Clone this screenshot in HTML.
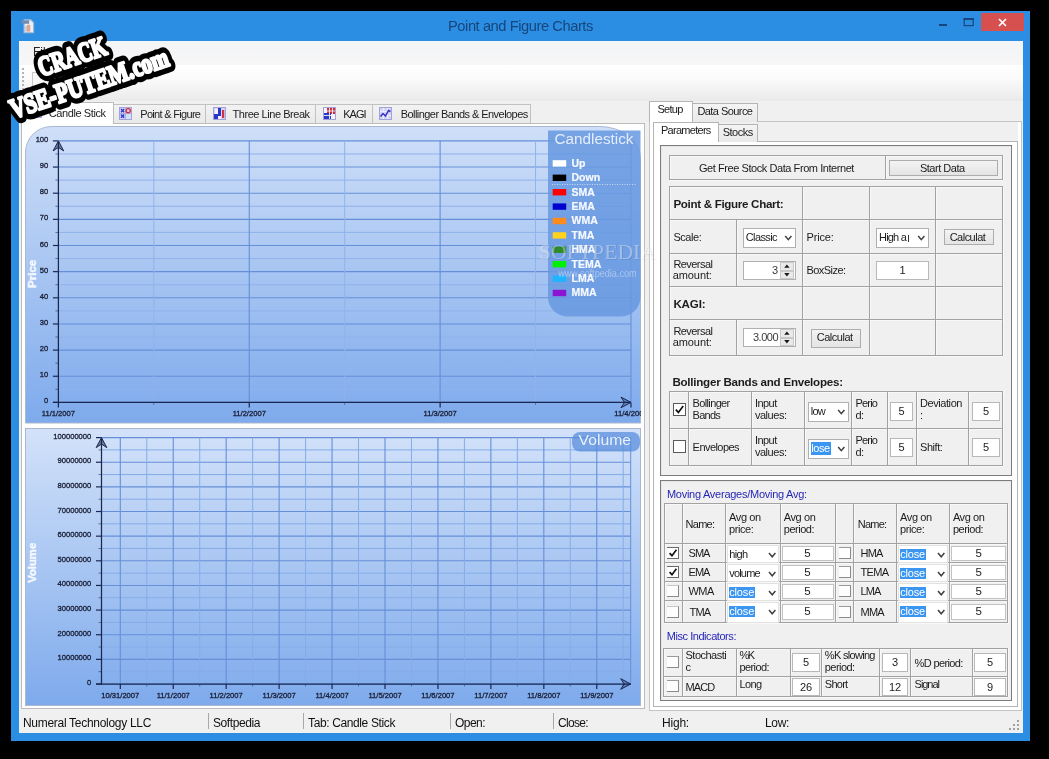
<!DOCTYPE html>
<html><head><meta charset="utf-8"><title>Point and Figure Charts</title>
<style>
html,body{margin:0;padding:0;background:#000;}
body{width:1049px;height:759px;position:relative;overflow:hidden;font-family:"Liberation Sans",sans-serif;font-size:11px;}
div,span,svg{position:absolute;box-sizing:border-box;}
#root{left:0;top:0;width:1049px;height:759px;will-change:transform;}
span{display:block;}
</style></head><body>
<div id="root"><div style="left:11px;top:11px;width:1019px;height:730px;background:#2b8ee3;"></div>
<div style="left:19px;top:41px;width:1004px;height:692px;background:#f0f0f0;"></div>
<svg style="left:19px;top:16.5px" width="18" height="18" viewBox="0 0 16 16"><path d="M4.5 2.5h6l2.5 2.5v9h-8.5z" fill="#e8eef5" stroke="#9fb6cf" stroke-width="1"/><rect x="2" y="3" width="7" height="3" fill="#6c8eb4"/><rect x="7" y="7" width="3" height="6" fill="#e2a58c"/><rect x="5.5" y="8" width="1.5" height="5" fill="#b9c9d8"/></svg>
<span style="left:448.00px;top:18.56px;font-size:14.7px;line-height:14.7px;color:#17467c;white-space:pre;letter-spacing:-0.445px;">Point and Figure Charts</span>
<div style="left:981px;top:13px;width:43px;height:17.5px;background:#d6504f;"></div>
<svg style="left:981px;top:13px" width="43" height="18"><path d="M18 6l7 7M25 6l-7 7" stroke="#fff" stroke-width="1.7" fill="none"/></svg>
<svg style="left:931px;top:13px" width="50" height="19"><rect x="8" y="11" width="8" height="2" fill="#17467c"/><rect x="33.200" y="5.600" width="9" height="7" fill="none" stroke="#17467c" stroke-width="1.2"/><rect x="32.600" y="5" width="10.2" height="2" fill="#17467c"/></svg>
<div style="left:19px;top:41px;width:1004px;height:24px;background:linear-gradient(#f3f4f5,#f7f7f8);"></div>
<div style="left:19px;top:65px;width:1004px;height:36px;background:linear-gradient(#ffffff 0%,#fbfbfb 35%,#eaeaea 100%);"></div>
<span style="left:33.00px;top:45.84px;font-size:12px;line-height:12px;color:#222;white-space:pre;">File</span>
<div style="left:22px;top:68px;width:2px;height:2px;background:#b0b4bc;"></div>
<div style="left:22px;top:72px;width:2px;height:2px;background:#b0b4bc;"></div>
<div style="left:22px;top:76px;width:2px;height:2px;background:#b0b4bc;"></div>
<div style="left:22px;top:80px;width:2px;height:2px;background:#b0b4bc;"></div>
<div style="left:22px;top:84px;width:2px;height:2px;background:#b0b4bc;"></div>
<div style="left:22px;top:88px;width:2px;height:2px;background:#b0b4bc;"></div>
<div style="left:32px;top:72px;width:24px;height:22px;border:1px solid #c8c8c8;background:#f8f8f8;"></div>
<div style="left:19px;top:710px;width:1004px;height:23px;background:#f0f0f0;"></div>
<div style="left:208px;top:713px;width:1px;height:16px;background:#a8a8a8;"></div>
<div style="left:303px;top:713px;width:1px;height:16px;background:#a8a8a8;"></div>
<div style="left:450px;top:713px;width:1px;height:16px;background:#a8a8a8;"></div>
<div style="left:553px;top:713px;width:1px;height:16px;background:#a8a8a8;"></div>
<span style="left:23.00px;top:716.54px;font-size:12px;line-height:12px;color:#111;white-space:pre;letter-spacing:-0.296px;">Numeral Technology LLC</span>
<span style="left:213.00px;top:716.54px;font-size:12px;line-height:12px;color:#111;white-space:pre;letter-spacing:-0.412px;">Softpedia</span>
<span style="left:308.00px;top:716.54px;font-size:12px;line-height:12px;color:#111;white-space:pre;letter-spacing:-0.375px;">Tab: Candle Stick</span>
<span style="left:455.00px;top:716.54px;font-size:12px;line-height:12px;color:#111;white-space:pre;letter-spacing:-0.538px;">Open:</span>
<span style="left:558.00px;top:716.54px;font-size:12px;line-height:12px;color:#111;white-space:pre;letter-spacing:-0.669px;">Close:</span>
<span style="left:662.00px;top:716.54px;font-size:12px;line-height:12px;color:#111;white-space:pre;letter-spacing:-0.203px;">High:</span>
<span style="left:765.00px;top:716.54px;font-size:12px;line-height:12px;color:#111;white-space:pre;letter-spacing:-0.337px;">Low:</span>
<div style="left:1017px;top:720px;width:2px;height:2px;background:#a0a0a0;"></div>
<div style="left:1013px;top:724px;width:2px;height:2px;background:#a0a0a0;"></div>
<div style="left:1017px;top:724px;width:2px;height:2px;background:#a0a0a0;"></div>
<div style="left:1009px;top:728px;width:2px;height:2px;background:#a0a0a0;"></div>
<div style="left:1013px;top:728px;width:2px;height:2px;background:#a0a0a0;"></div>
<div style="left:1017px;top:728px;width:2px;height:2px;background:#a0a0a0;"></div>
<div style="left:21px;top:123px;width:624px;height:586px;background:#fff;border:1px solid #bcbcbc;"></div>
<div style="left:113px;top:104px;width:93px;height:19px;background:linear-gradient(#f2f2f2,#e9e9e9);border:1px solid #c2c2c2;border-bottom:none;"></div>
<div style="left:205px;top:104px;width:111px;height:19px;background:linear-gradient(#f2f2f2,#e9e9e9);border:1px solid #c2c2c2;border-bottom:none;"></div>
<div style="left:315px;top:104px;width:58px;height:19px;background:linear-gradient(#f2f2f2,#e9e9e9);border:1px solid #c2c2c2;border-bottom:none;"></div>
<div style="left:372px;top:104px;width:159px;height:19px;background:linear-gradient(#f2f2f2,#e9e9e9);border:1px solid #c2c2c2;border-bottom:none;"></div>
<div style="left:21px;top:102px;width:93px;height:22px;background:#fff;border:1px solid #bdbdbd;border-bottom:none;"></div>
<span style="left:48.70px;top:107.69px;font-size:11px;line-height:11px;color:#1c1c1c;white-space:pre;letter-spacing:-0.396px;">Candle Stick</span>
<span style="left:140.30px;top:109.29px;font-size:11px;line-height:11px;color:#1c1c1c;white-space:pre;letter-spacing:-0.693px;">Point &amp; Figure</span>
<span style="left:232.60px;top:109.29px;font-size:11px;line-height:11px;color:#1c1c1c;white-space:pre;letter-spacing:-0.461px;">Three Line Break</span>
<span style="left:343.20px;top:109.29px;font-size:11px;line-height:11px;color:#1c1c1c;white-space:pre;letter-spacing:-0.947px;">KAGI</span>
<span style="left:400.70px;top:109.29px;font-size:11px;line-height:11px;color:#1c1c1c;white-space:pre;letter-spacing:-0.551px;">Bollinger Bands &amp; Envelopes</span>
<svg style="left:29px;top:105px" width="13" height="13" viewBox="0 0 13 13"><rect x="0.5" y="0.5" width="12" height="12" fill="#d4d4f4" stroke="#a3a3da"/><rect x="1" y="6" width="3" height="6" fill="#4a3ab0"/><rect x="4" y="3" width="3" height="7" fill="#6a5acd"/><rect x="8" y="4" width="3" height="8" fill="#c83040"/></svg>
<svg style="left:119px;top:107px" width="13" height="13" viewBox="0 0 13 13"><rect x="0.5" y="0.5" width="12" height="12" fill="#d4d4f4" stroke="#a3a3da"/><path d="M1 6.5h11M6.5 1v11" stroke="#b0b0e0" stroke-width="1"/><rect x="7" y="7" width="5" height="5" fill="#cfe4f6"/><path d="M2 2l3.2 3.2M5.2 2l-3.200 3.2M2 7.6l3.2 3.2M5.2 7.6l-3.200 3.2" stroke="#2a3cd0" stroke-width="1.4"/><circle cx="9.2" cy="3.8" r="2.1" fill="#f4d0d8" stroke="#d02838" stroke-width="1.3"/></svg>
<svg style="left:213px;top:107px" width="13" height="13" viewBox="0 0 13 13"><rect x="0.5" y="0.5" width="12" height="12" fill="#d4d4f4" stroke="#a3a3da"/><rect x="1" y="7" width="4" height="5" fill="#2a36c8"/><rect x="2" y="2" width="3" height="5" fill="#f4f4ff"/><rect x="5" y="1" width="3" height="8" fill="#2a36c8"/><rect x="5" y="9" width="3" height="3" fill="#f4f4ff"/><rect x="9" y="3" width="2.200" height="8" fill="#d83040"/></svg>
<svg style="left:323px;top:107px" width="13" height="13" viewBox="0 0 13 13"><rect x="0.5" y="0.5" width="12" height="12" fill="#f6f6fc" stroke="#a3a3da"/><rect x="4" y="1" width="8" height="6" fill="#d62a3a"/><rect x="1" y="6" width="7" height="6" fill="#2a36c8"/><path d="M6.5 1v11M9.5 1v11M1 4h11M1 8.5h11" stroke="#f0f0fa" stroke-width="0.9"/></svg>
<svg style="left:379px;top:107px" width="13" height="13" viewBox="0 0 13 13"><rect x="0.5" y="0.5" width="12" height="12" fill="#d4d4f4" stroke="#a3a3da"/><path d="M1 4.500h11M1 8.500h11M4.500 1v11M8.500 1v11" stroke="#ededfb" stroke-width="1"/><path d="M1.500 9.500l2.500-3 2.500 2.500 3-5.500 2 1" stroke="#3030c8" stroke-width="1.500" fill="none"/></svg>
<svg style="left:25px;top:126px" width="616" height="298" viewBox="25 126 616 298"><defs><linearGradient id="g1" x1="0" y1="0" x2="0" y2="1"><stop offset="0" stop-color="#cfdff8"/><stop offset="1" stop-color="#7eaaec"/></linearGradient></defs><path d="M51.5 126.5H599.5A41 32 0 0 1 640.5 158.5V423H25.5V152.5A26 26 0 0 1 51.5 126.5z" fill="url(#g1)" stroke="#a9b7d0" stroke-width="1"/><path d="M58.4 140.90H631" stroke="#668fd8" stroke-width="1.1"/><path d="M52.9 140.90H58.4" stroke="#1a2850" stroke-width="1.2"/><text x="48.3" y="141.9" font-size="7.6" text-anchor="end" fill="#1b2138" stroke="#1b2138" stroke-width="0.32" font-family="Liberation Sans, sans-serif">100</text><path d="M58.4 153.97H631" stroke="#8fb3eb" stroke-width="1"/><path d="M55.4 153.97H58.4" stroke="#1a2850" stroke-width="0.8" opacity="0.7"/><path d="M58.4 167.05H631" stroke="#668fd8" stroke-width="1.1"/><path d="M52.9 167.05H58.4" stroke="#1a2850" stroke-width="1.2"/><text x="48.3" y="168.05" font-size="7.6" text-anchor="end" fill="#1b2138" stroke="#1b2138" stroke-width="0.32" font-family="Liberation Sans, sans-serif">90</text><path d="M58.4 180.12H631" stroke="#8fb3eb" stroke-width="1"/><path d="M55.4 180.12H58.4" stroke="#1a2850" stroke-width="0.8" opacity="0.7"/><path d="M58.4 193.20H631" stroke="#668fd8" stroke-width="1.1"/><path d="M52.9 193.20H58.4" stroke="#1a2850" stroke-width="1.2"/><text x="48.3" y="194.2" font-size="7.6" text-anchor="end" fill="#1b2138" stroke="#1b2138" stroke-width="0.32" font-family="Liberation Sans, sans-serif">80</text><path d="M58.4 206.28H631" stroke="#8fb3eb" stroke-width="1"/><path d="M55.4 206.28H58.4" stroke="#1a2850" stroke-width="0.8" opacity="0.7"/><path d="M58.4 219.35H631" stroke="#668fd8" stroke-width="1.1"/><path d="M52.9 219.35H58.4" stroke="#1a2850" stroke-width="1.2"/><text x="48.3" y="220.35" font-size="7.6" text-anchor="end" fill="#1b2138" stroke="#1b2138" stroke-width="0.32" font-family="Liberation Sans, sans-serif">70</text><path d="M58.4 232.43H631" stroke="#8fb3eb" stroke-width="1"/><path d="M55.4 232.43H58.4" stroke="#1a2850" stroke-width="0.8" opacity="0.7"/><path d="M58.4 245.50H631" stroke="#668fd8" stroke-width="1.1"/><path d="M52.9 245.50H58.4" stroke="#1a2850" stroke-width="1.2"/><text x="48.3" y="246.5" font-size="7.6" text-anchor="end" fill="#1b2138" stroke="#1b2138" stroke-width="0.32" font-family="Liberation Sans, sans-serif">60</text><path d="M58.4 258.57H631" stroke="#8fb3eb" stroke-width="1"/><path d="M55.4 258.57H58.4" stroke="#1a2850" stroke-width="0.8" opacity="0.7"/><path d="M58.4 271.65H631" stroke="#668fd8" stroke-width="1.1"/><path d="M52.9 271.65H58.4" stroke="#1a2850" stroke-width="1.2"/><text x="48.3" y="272.65" font-size="7.6" text-anchor="end" fill="#1b2138" stroke="#1b2138" stroke-width="0.32" font-family="Liberation Sans, sans-serif">50</text><path d="M58.4 284.73H631" stroke="#8fb3eb" stroke-width="1"/><path d="M55.4 284.73H58.4" stroke="#1a2850" stroke-width="0.8" opacity="0.7"/><path d="M58.4 297.80H631" stroke="#668fd8" stroke-width="1.1"/><path d="M52.9 297.80H58.4" stroke="#1a2850" stroke-width="1.2"/><text x="48.3" y="298.79999999999995" font-size="7.6" text-anchor="end" fill="#1b2138" stroke="#1b2138" stroke-width="0.32" font-family="Liberation Sans, sans-serif">40</text><path d="M58.4 310.88H631" stroke="#8fb3eb" stroke-width="1"/><path d="M55.4 310.88H58.4" stroke="#1a2850" stroke-width="0.8" opacity="0.7"/><path d="M58.4 323.95H631" stroke="#668fd8" stroke-width="1.1"/><path d="M52.9 323.95H58.4" stroke="#1a2850" stroke-width="1.2"/><text x="48.3" y="324.95" font-size="7.6" text-anchor="end" fill="#1b2138" stroke="#1b2138" stroke-width="0.32" font-family="Liberation Sans, sans-serif">30</text><path d="M58.4 337.02H631" stroke="#8fb3eb" stroke-width="1"/><path d="M55.4 337.02H58.4" stroke="#1a2850" stroke-width="0.8" opacity="0.7"/><path d="M58.4 350.10H631" stroke="#668fd8" stroke-width="1.1"/><path d="M52.9 350.10H58.4" stroke="#1a2850" stroke-width="1.2"/><text x="48.3" y="351.1" font-size="7.6" text-anchor="end" fill="#1b2138" stroke="#1b2138" stroke-width="0.32" font-family="Liberation Sans, sans-serif">20</text><path d="M58.4 363.17H631" stroke="#8fb3eb" stroke-width="1"/><path d="M55.4 363.17H58.4" stroke="#1a2850" stroke-width="0.8" opacity="0.7"/><path d="M58.4 376.25H631" stroke="#668fd8" stroke-width="1.1"/><path d="M52.9 376.25H58.4" stroke="#1a2850" stroke-width="1.2"/><text x="48.3" y="377.25" font-size="7.6" text-anchor="end" fill="#1b2138" stroke="#1b2138" stroke-width="0.32" font-family="Liberation Sans, sans-serif">10</text><path d="M58.4 389.32H631" stroke="#8fb3eb" stroke-width="1"/><path d="M55.4 389.32H58.4" stroke="#1a2850" stroke-width="0.8" opacity="0.7"/><path d="M58.4 402.40H631" stroke="#668fd8" stroke-width="1.1"/><path d="M52.9 402.40H58.4" stroke="#1a2850" stroke-width="1.2"/><text x="48.3" y="403.4" font-size="7.6" text-anchor="end" fill="#1b2138" stroke="#1b2138" stroke-width="0.32" font-family="Liberation Sans, sans-serif">0</text><path d="M153.83 140.9V402.4" stroke="#8fb3eb" stroke-width="1"/><path d="M153.83 402.4V404.9" stroke="#1a2850" stroke-width="0.8" opacity="0.6"/><path d="M249.26 140.9V402.4" stroke="#668fd8" stroke-width="1.1"/><path d="M249.26 402.4V407.4" stroke="#1a2850" stroke-width="1.2"/><path d="M344.69 140.9V402.4" stroke="#8fb3eb" stroke-width="1"/><path d="M344.69 402.4V404.9" stroke="#1a2850" stroke-width="0.8" opacity="0.6"/><path d="M440.12 140.9V402.4" stroke="#668fd8" stroke-width="1.1"/><path d="M440.12 402.4V407.4" stroke="#1a2850" stroke-width="1.2"/><path d="M535.55 140.9V402.4" stroke="#8fb3eb" stroke-width="1"/><path d="M535.55 402.4V404.9" stroke="#1a2850" stroke-width="0.8" opacity="0.6"/><path d="M630.98 140.9V402.4" stroke="#668fd8" stroke-width="1.1"/><path d="M630.98 402.4V407.4" stroke="#1a2850" stroke-width="1.2"/><path d="M58.4 141.9V407.4" stroke="#1a2850" stroke-width="1.25"/><path d="M52.9 402.4H631" stroke="#1a2850" stroke-width="1.25"/><path d="M58.4 140.9L63.699999999999996 150.9L58.4 147.4L53.1 150.9z" fill="#1a2850" fill-opacity="0.55" stroke="#1a2850" stroke-width="1"/><path d="M631 402.4L621 407.7L624.5 402.4L621 397.09999999999997z" fill="#1a2850" fill-opacity="0.35" stroke="#1a2850" stroke-width="1"/><text x="58.40" y="416.2" font-size="7.6" text-anchor="middle" fill="#1b2138" stroke="#1b2138" stroke-width="0.32" font-family="Liberation Sans, sans-serif">11/1/2007</text><text x="249.26" y="416.2" font-size="7.6" text-anchor="middle" fill="#1b2138" stroke="#1b2138" stroke-width="0.32" font-family="Liberation Sans, sans-serif">11/2/2007</text><text x="440.12" y="416.2" font-size="7.6" text-anchor="middle" fill="#1b2138" stroke="#1b2138" stroke-width="0.32" font-family="Liberation Sans, sans-serif">11/3/2007</text><text x="630.98" y="416.2" font-size="7.6" text-anchor="middle" fill="#1b2138" stroke="#1b2138" stroke-width="0.32" font-family="Liberation Sans, sans-serif">11/4/2007</text><text transform="translate(36,273.9) rotate(-90)" font-size="11.6" font-weight="bold" text-anchor="middle" fill="#f4f8fe" stroke="#f4f8fe" stroke-width="0.45" font-family="Liberation Sans, sans-serif">Price</text><path d="M548 130.5H640.5V297A19.5 19.5 0 0 1 621 316.5H567.5A19.5 19.5 0 0 1 548 297z" fill="#6898e1" fill-opacity="0.86"/><text x="594" y="144.3" font-size="15.2" text-anchor="middle" fill="#e4edfb" textLength="79" lengthAdjust="spacingAndGlyphs" font-family="Liberation Sans, sans-serif">Candlestick</text><rect x="552.7" y="160.20" width="13.5" height="6.4" fill="#ffffff"/><text x="571.5" y="166.80" font-size="10.5" font-weight="bold" fill="#f6f9ff" stroke="#f6f9ff" stroke-width="0.2" font-family="Liberation Sans, sans-serif">Up</text><rect x="552.7" y="174.60" width="13.5" height="6.4" fill="#000000"/><text x="571.5" y="181.20" font-size="10.5" font-weight="bold" fill="#f6f9ff" stroke="#f6f9ff" stroke-width="0.2" font-family="Liberation Sans, sans-serif">Down</text><rect x="552.7" y="189.00" width="13.5" height="6.4" fill="#ff0000"/><text x="571.5" y="195.60" font-size="10.5" font-weight="bold" fill="#f6f9ff" stroke="#f6f9ff" stroke-width="0.2" font-family="Liberation Sans, sans-serif">SMA</text><rect x="552.7" y="203.40" width="13.5" height="6.4" fill="#0000d0"/><text x="571.5" y="210.00" font-size="10.5" font-weight="bold" fill="#f6f9ff" stroke="#f6f9ff" stroke-width="0.2" font-family="Liberation Sans, sans-serif">EMA</text><rect x="552.7" y="217.80" width="13.5" height="6.4" fill="#ff8c1a"/><text x="571.5" y="224.40" font-size="10.5" font-weight="bold" fill="#f6f9ff" stroke="#f6f9ff" stroke-width="0.2" font-family="Liberation Sans, sans-serif">WMA</text><rect x="552.7" y="232.20" width="13.5" height="6.4" fill="#ffd21e"/><text x="571.5" y="238.80" font-size="10.5" font-weight="bold" fill="#f6f9ff" stroke="#f6f9ff" stroke-width="0.2" font-family="Liberation Sans, sans-serif">TMA</text><rect x="552.7" y="246.60" width="13.5" height="6.4" fill="#2e8b2e"/><text x="571.5" y="253.20" font-size="10.5" font-weight="bold" fill="#f6f9ff" stroke="#f6f9ff" stroke-width="0.2" font-family="Liberation Sans, sans-serif">HMA</text><rect x="552.7" y="261.00" width="13.5" height="6.4" fill="#00f000"/><text x="571.5" y="267.60" font-size="10.5" font-weight="bold" fill="#f6f9ff" stroke="#f6f9ff" stroke-width="0.2" font-family="Liberation Sans, sans-serif">TEMA</text><rect x="552.7" y="275.40" width="13.5" height="6.4" fill="#1eb4ff"/><text x="571.5" y="282.00" font-size="10.5" font-weight="bold" fill="#f6f9ff" stroke="#f6f9ff" stroke-width="0.2" font-family="Liberation Sans, sans-serif">LMA</text><rect x="552.7" y="289.80" width="13.5" height="6.4" fill="#8c14d2"/><text x="571.5" y="296.40" font-size="10.5" font-weight="bold" fill="#f6f9ff" stroke="#f6f9ff" stroke-width="0.2" font-family="Liberation Sans, sans-serif">MMA</text><path d="M552 184.5H636" stroke="#dfe9fa" stroke-width="1" stroke-dasharray="1 1.5" opacity="0.8"/></svg>
<svg style="left:25px;top:428px" width="616" height="278" viewBox="25 428 616 278"><defs><linearGradient id="g2" x1="0" y1="0" x2="0" y2="1"><stop offset="0" stop-color="#d3e2f9"/><stop offset="1" stop-color="#7eaaec"/></linearGradient></defs><rect x="25.5" y="428.5" width="615" height="277" fill="url(#g2)" stroke="#a9b7d0"/><path d="M101.5 437.60H630.7" stroke="#668fd8" stroke-width="1.1"/><path d="M96.0 437.60H101.5" stroke="#1a2850" stroke-width="1.2"/><text x="91.3" y="438.6" font-size="7.6" text-anchor="end" fill="#1b2138" stroke="#1b2138" stroke-width="0.32" font-family="Liberation Sans, sans-serif">100000000</text><path d="M101.5 449.92H630.7" stroke="#86ace8" stroke-width="1"/><path d="M98.5 449.92H101.5" stroke="#1a2850" stroke-width="0.8" opacity="0.7"/><path d="M101.5 462.24H630.7" stroke="#668fd8" stroke-width="1.1"/><path d="M96.0 462.24H101.5" stroke="#1a2850" stroke-width="1.2"/><text x="91.3" y="463.24" font-size="7.6" text-anchor="end" fill="#1b2138" stroke="#1b2138" stroke-width="0.32" font-family="Liberation Sans, sans-serif">90000000</text><path d="M101.5 474.56H630.7" stroke="#86ace8" stroke-width="1"/><path d="M98.5 474.56H101.5" stroke="#1a2850" stroke-width="0.8" opacity="0.7"/><path d="M101.5 486.88H630.7" stroke="#668fd8" stroke-width="1.1"/><path d="M96.0 486.88H101.5" stroke="#1a2850" stroke-width="1.2"/><text x="91.3" y="487.88" font-size="7.6" text-anchor="end" fill="#1b2138" stroke="#1b2138" stroke-width="0.32" font-family="Liberation Sans, sans-serif">80000000</text><path d="M101.5 499.20H630.7" stroke="#86ace8" stroke-width="1"/><path d="M98.5 499.20H101.5" stroke="#1a2850" stroke-width="0.8" opacity="0.7"/><path d="M101.5 511.52H630.7" stroke="#668fd8" stroke-width="1.1"/><path d="M96.0 511.52H101.5" stroke="#1a2850" stroke-width="1.2"/><text x="91.3" y="512.52" font-size="7.6" text-anchor="end" fill="#1b2138" stroke="#1b2138" stroke-width="0.32" font-family="Liberation Sans, sans-serif">70000000</text><path d="M101.5 523.84H630.7" stroke="#86ace8" stroke-width="1"/><path d="M98.5 523.84H101.5" stroke="#1a2850" stroke-width="0.8" opacity="0.7"/><path d="M101.5 536.16H630.7" stroke="#668fd8" stroke-width="1.1"/><path d="M96.0 536.16H101.5" stroke="#1a2850" stroke-width="1.2"/><text x="91.3" y="537.16" font-size="7.6" text-anchor="end" fill="#1b2138" stroke="#1b2138" stroke-width="0.32" font-family="Liberation Sans, sans-serif">60000000</text><path d="M101.5 548.48H630.7" stroke="#86ace8" stroke-width="1"/><path d="M98.5 548.48H101.5" stroke="#1a2850" stroke-width="0.8" opacity="0.7"/><path d="M101.5 560.80H630.7" stroke="#668fd8" stroke-width="1.1"/><path d="M96.0 560.80H101.5" stroke="#1a2850" stroke-width="1.2"/><text x="91.3" y="561.8" font-size="7.6" text-anchor="end" fill="#1b2138" stroke="#1b2138" stroke-width="0.32" font-family="Liberation Sans, sans-serif">50000000</text><path d="M101.5 573.12H630.7" stroke="#86ace8" stroke-width="1"/><path d="M98.5 573.12H101.5" stroke="#1a2850" stroke-width="0.8" opacity="0.7"/><path d="M101.5 585.44H630.7" stroke="#668fd8" stroke-width="1.1"/><path d="M96.0 585.44H101.5" stroke="#1a2850" stroke-width="1.2"/><text x="91.3" y="586.44" font-size="7.6" text-anchor="end" fill="#1b2138" stroke="#1b2138" stroke-width="0.32" font-family="Liberation Sans, sans-serif">40000000</text><path d="M101.5 597.76H630.7" stroke="#86ace8" stroke-width="1"/><path d="M98.5 597.76H101.5" stroke="#1a2850" stroke-width="0.8" opacity="0.7"/><path d="M101.5 610.08H630.7" stroke="#668fd8" stroke-width="1.1"/><path d="M96.0 610.08H101.5" stroke="#1a2850" stroke-width="1.2"/><text x="91.3" y="611.08" font-size="7.6" text-anchor="end" fill="#1b2138" stroke="#1b2138" stroke-width="0.32" font-family="Liberation Sans, sans-serif">30000000</text><path d="M101.5 622.40H630.7" stroke="#86ace8" stroke-width="1"/><path d="M98.5 622.40H101.5" stroke="#1a2850" stroke-width="0.8" opacity="0.7"/><path d="M101.5 634.72H630.7" stroke="#668fd8" stroke-width="1.1"/><path d="M96.0 634.72H101.5" stroke="#1a2850" stroke-width="1.2"/><text x="91.3" y="635.72" font-size="7.6" text-anchor="end" fill="#1b2138" stroke="#1b2138" stroke-width="0.32" font-family="Liberation Sans, sans-serif">20000000</text><path d="M101.5 647.04H630.7" stroke="#86ace8" stroke-width="1"/><path d="M98.5 647.04H101.5" stroke="#1a2850" stroke-width="0.8" opacity="0.7"/><path d="M101.5 659.36H630.7" stroke="#668fd8" stroke-width="1.1"/><path d="M96.0 659.36H101.5" stroke="#1a2850" stroke-width="1.2"/><text x="91.3" y="660.36" font-size="7.6" text-anchor="end" fill="#1b2138" stroke="#1b2138" stroke-width="0.32" font-family="Liberation Sans, sans-serif">10000000</text><path d="M101.5 671.68H630.7" stroke="#86ace8" stroke-width="1"/><path d="M98.5 671.68H101.5" stroke="#1a2850" stroke-width="0.8" opacity="0.7"/><path d="M101.5 684.00H630.7" stroke="#668fd8" stroke-width="1.1"/><path d="M96.0 684.00H101.5" stroke="#1a2850" stroke-width="1.2"/><text x="91.3" y="685.0" font-size="7.6" text-anchor="end" fill="#1b2138" stroke="#1b2138" stroke-width="0.32" font-family="Liberation Sans, sans-serif">0</text><path d="M120.30 437.6V684" stroke="#668fd8" stroke-width="1.1"/><path d="M120.30 684V689" stroke="#1a2850" stroke-width="1.2"/><text x="120.30" y="698" font-size="7.6" text-anchor="middle" fill="#1b2138" stroke="#1b2138" stroke-width="0.32" font-family="Liberation Sans, sans-serif">10/31/2007</text><path d="M146.77 437.6V684" stroke="#86ace8" stroke-width="1"/><path d="M146.77 684V686.5" stroke="#1a2850" stroke-width="0.8" opacity="0.6"/><path d="M173.24 437.6V684" stroke="#668fd8" stroke-width="1.1"/><path d="M173.24 684V689" stroke="#1a2850" stroke-width="1.2"/><text x="173.24" y="698" font-size="7.6" text-anchor="middle" fill="#1b2138" stroke="#1b2138" stroke-width="0.32" font-family="Liberation Sans, sans-serif">11/1/2007</text><path d="M199.71 437.6V684" stroke="#86ace8" stroke-width="1"/><path d="M199.71 684V686.5" stroke="#1a2850" stroke-width="0.8" opacity="0.6"/><path d="M226.18 437.6V684" stroke="#668fd8" stroke-width="1.1"/><path d="M226.18 684V689" stroke="#1a2850" stroke-width="1.2"/><text x="226.18" y="698" font-size="7.6" text-anchor="middle" fill="#1b2138" stroke="#1b2138" stroke-width="0.32" font-family="Liberation Sans, sans-serif">11/2/2007</text><path d="M252.65 437.6V684" stroke="#86ace8" stroke-width="1"/><path d="M252.65 684V686.5" stroke="#1a2850" stroke-width="0.8" opacity="0.6"/><path d="M279.12 437.6V684" stroke="#668fd8" stroke-width="1.1"/><path d="M279.12 684V689" stroke="#1a2850" stroke-width="1.2"/><text x="279.12" y="698" font-size="7.6" text-anchor="middle" fill="#1b2138" stroke="#1b2138" stroke-width="0.32" font-family="Liberation Sans, sans-serif">11/3/2007</text><path d="M305.59 437.6V684" stroke="#86ace8" stroke-width="1"/><path d="M305.59 684V686.5" stroke="#1a2850" stroke-width="0.8" opacity="0.6"/><path d="M332.06 437.6V684" stroke="#668fd8" stroke-width="1.1"/><path d="M332.06 684V689" stroke="#1a2850" stroke-width="1.2"/><text x="332.06" y="698" font-size="7.6" text-anchor="middle" fill="#1b2138" stroke="#1b2138" stroke-width="0.32" font-family="Liberation Sans, sans-serif">11/4/2007</text><path d="M358.53 437.6V684" stroke="#86ace8" stroke-width="1"/><path d="M358.53 684V686.5" stroke="#1a2850" stroke-width="0.8" opacity="0.6"/><path d="M385.00 437.6V684" stroke="#668fd8" stroke-width="1.1"/><path d="M385.00 684V689" stroke="#1a2850" stroke-width="1.2"/><text x="385.00" y="698" font-size="7.6" text-anchor="middle" fill="#1b2138" stroke="#1b2138" stroke-width="0.32" font-family="Liberation Sans, sans-serif">11/5/2007</text><path d="M411.47 437.6V684" stroke="#86ace8" stroke-width="1"/><path d="M411.47 684V686.5" stroke="#1a2850" stroke-width="0.8" opacity="0.6"/><path d="M437.94 437.6V684" stroke="#668fd8" stroke-width="1.1"/><path d="M437.94 684V689" stroke="#1a2850" stroke-width="1.2"/><text x="437.94" y="698" font-size="7.6" text-anchor="middle" fill="#1b2138" stroke="#1b2138" stroke-width="0.32" font-family="Liberation Sans, sans-serif">11/6/2007</text><path d="M464.41 437.6V684" stroke="#86ace8" stroke-width="1"/><path d="M464.41 684V686.5" stroke="#1a2850" stroke-width="0.8" opacity="0.6"/><path d="M490.88 437.6V684" stroke="#668fd8" stroke-width="1.1"/><path d="M490.88 684V689" stroke="#1a2850" stroke-width="1.2"/><text x="490.88" y="698" font-size="7.6" text-anchor="middle" fill="#1b2138" stroke="#1b2138" stroke-width="0.32" font-family="Liberation Sans, sans-serif">11/7/2007</text><path d="M517.35 437.6V684" stroke="#86ace8" stroke-width="1"/><path d="M517.35 684V686.5" stroke="#1a2850" stroke-width="0.8" opacity="0.6"/><path d="M543.82 437.6V684" stroke="#668fd8" stroke-width="1.1"/><path d="M543.82 684V689" stroke="#1a2850" stroke-width="1.2"/><text x="543.82" y="698" font-size="7.6" text-anchor="middle" fill="#1b2138" stroke="#1b2138" stroke-width="0.32" font-family="Liberation Sans, sans-serif">11/8/2007</text><path d="M570.29 437.6V684" stroke="#86ace8" stroke-width="1"/><path d="M570.29 684V686.5" stroke="#1a2850" stroke-width="0.8" opacity="0.6"/><path d="M596.76 437.6V684" stroke="#668fd8" stroke-width="1.1"/><path d="M596.76 684V689" stroke="#1a2850" stroke-width="1.2"/><text x="596.76" y="698" font-size="7.6" text-anchor="middle" fill="#1b2138" stroke="#1b2138" stroke-width="0.32" font-family="Liberation Sans, sans-serif">11/9/2007</text><path d="M623.23 437.6V684" stroke="#86ace8" stroke-width="1"/><path d="M623.23 684V686.5" stroke="#1a2850" stroke-width="0.8" opacity="0.6"/><path d="M630.7 437.6V684" stroke="#668fd8" stroke-width="1"/><path d="M101.5 438.6V685" stroke="#1a2850" stroke-width="1.25"/><path d="M96.0 684H630.7" stroke="#1a2850" stroke-width="1.25"/><path d="M101.5 437.6L106.8 447.6L101.5 444.1L96.2 447.6z" fill="#1a2850" fill-opacity="0.55" stroke="#1a2850" stroke-width="1"/><path d="M630.7 684L620.7 689.3L624.2 684L620.7 678.7z" fill="#1a2850" fill-opacity="0.35" stroke="#1a2850" stroke-width="1"/><text transform="translate(35.6,562.8) rotate(-90)" font-size="11.3" font-weight="bold" text-anchor="middle" fill="#f4f8fe" stroke="#f4f8fe" stroke-width="0.45" font-family="Liberation Sans, sans-serif">Volume</text><rect x="572" y="432" width="68" height="19.5" rx="8" fill="#5a8edc" fill-opacity="0.75"/><text x="604.8" y="445.4" font-size="15.3" text-anchor="middle" fill="#e8f0fc" textLength="52.5" lengthAdjust="spacingAndGlyphs" font-family="Liberation Sans, sans-serif">Volume</text></svg>
<div style="left:649px;top:121px;width:373px;height:590px;background:#fff;border:1px solid #c4c4c4;"></div>
<div style="left:692px;top:103px;width:66px;height:19px;background:linear-gradient(#f4f4f4,#e9e9e9);border:1px solid #b4b4b4;border-bottom:none;"></div>
<div style="left:649px;top:101px;width:44px;height:21px;background:#fff;border:1px solid #b4b4b4;border-bottom:none;"></div>
<span style="left:657.40px;top:104.29px;font-size:11px;line-height:11px;color:#1c1c1c;white-space:pre;letter-spacing:-0.689px;">Setup</span>
<span style="left:697.40px;top:106.19px;font-size:11px;line-height:11px;color:#1c1c1c;white-space:pre;letter-spacing:-0.559px;">Data Source</span>
<div style="left:653px;top:122px;width:365px;height:20px;background:#f0f0f0;"></div>
<div style="left:653px;top:141px;width:365px;height:566px;background:#fff;border:1px solid #b4b4b4;"></div>
<div style="left:718px;top:124px;width:40px;height:18px;background:linear-gradient(#f4f4f4,#e9e9e9);border:1px solid #b4b4b4;border-bottom:none;"></div>
<div style="left:653px;top:122px;width:66px;height:20px;background:#fff;border:1px solid #b4b4b4;border-bottom:none;"></div>
<span style="left:661.00px;top:125.29px;font-size:11px;line-height:11px;color:#1c1c1c;white-space:pre;letter-spacing:-0.726px;">Parameters</span>
<span style="left:722.70px;top:127.19px;font-size:11px;line-height:11px;color:#1c1c1c;white-space:pre;letter-spacing:-0.502px;">Stocks</span>
<div style="left:660px;top:145px;width:352px;height:331px;background:#f0f0f0;border:1px solid #7c7c7c;box-shadow:inset 1px 1px 0 #e6e6e6;"></div>
<div style="left:660px;top:480px;width:352px;height:221px;background:#f0f0f0;border:1px solid #7c7c7c;box-shadow:inset 1px 1px 0 #e6e6e6;"></div>
<div style="left:670px;top:155px;width:1px;height:25px;background:rgba(255,255,255,0.55);"></div>
<div style="left:1003px;top:155px;width:1px;height:25px;background:rgba(255,255,255,0.55);"></div>
<div style="left:669px;top:156px;width:334px;height:1px;background:rgba(255,255,255,0.55);"></div>
<div style="left:669px;top:180px;width:334px;height:1px;background:rgba(255,255,255,0.55);"></div>
<div style="left:886px;top:155px;width:1px;height:25px;background:rgba(255,255,255,0.55);"></div>
<div style="left:669px;top:155px;width:1px;height:25px;background:#a2a2a2;"></div>
<div style="left:1002px;top:155px;width:1px;height:25px;background:#a2a2a2;"></div>
<div style="left:669px;top:155px;width:334px;height:1px;background:#a2a2a2;"></div>
<div style="left:669px;top:179px;width:334px;height:1px;background:#a2a2a2;"></div>
<div style="left:885px;top:155px;width:1px;height:25px;background:#a2a2a2;"></div>
<span style="left:699.00px;top:163.29px;font-size:11px;line-height:11px;color:#1c1c1c;white-space:pre;letter-spacing:-0.435px;">Get Free Stock Data From Internet</span>
<div style="left:889px;top:160px;width:109px;height:16px;border:1px solid #adadad;background:linear-gradient(#f3f3f3,#e4e4e4);"></div>
<span style="left:919.95px;top:163.19px;font-size:11px;line-height:11px;color:#1c1c1c;white-space:pre;letter-spacing:-0.482px;">Start Data</span>
<div style="left:670px;top:186px;width:1px;height:170px;background:rgba(255,255,255,0.55);"></div>
<div style="left:1003px;top:186px;width:1px;height:170px;background:rgba(255,255,255,0.55);"></div>
<div style="left:669px;top:187px;width:334px;height:1px;background:rgba(255,255,255,0.55);"></div>
<div style="left:669px;top:356px;width:334px;height:1px;background:rgba(255,255,255,0.55);"></div>
<div style="left:737px;top:219px;width:1px;height:68px;background:rgba(255,255,255,0.55);"></div>
<div style="left:737px;top:319px;width:1px;height:37px;background:rgba(255,255,255,0.55);"></div>
<div style="left:803px;top:186px;width:1px;height:170px;background:rgba(255,255,255,0.55);"></div>
<div style="left:870px;top:186px;width:1px;height:170px;background:rgba(255,255,255,0.55);"></div>
<div style="left:936px;top:186px;width:1px;height:170px;background:rgba(255,255,255,0.55);"></div>
<div style="left:669px;top:220px;width:334px;height:1px;background:rgba(255,255,255,0.55);"></div>
<div style="left:669px;top:254px;width:334px;height:1px;background:rgba(255,255,255,0.55);"></div>
<div style="left:669px;top:287px;width:334px;height:1px;background:rgba(255,255,255,0.55);"></div>
<div style="left:669px;top:320px;width:334px;height:1px;background:rgba(255,255,255,0.55);"></div>
<div style="left:669px;top:186px;width:1px;height:170px;background:#a2a2a2;"></div>
<div style="left:1002px;top:186px;width:1px;height:170px;background:#a2a2a2;"></div>
<div style="left:669px;top:186px;width:334px;height:1px;background:#a2a2a2;"></div>
<div style="left:669px;top:355px;width:334px;height:1px;background:#a2a2a2;"></div>
<div style="left:736px;top:219px;width:1px;height:68px;background:#a2a2a2;"></div>
<div style="left:736px;top:319px;width:1px;height:37px;background:#a2a2a2;"></div>
<div style="left:802px;top:186px;width:1px;height:170px;background:#a2a2a2;"></div>
<div style="left:869px;top:186px;width:1px;height:170px;background:#a2a2a2;"></div>
<div style="left:935px;top:186px;width:1px;height:170px;background:#a2a2a2;"></div>
<div style="left:669px;top:219px;width:334px;height:1px;background:#a2a2a2;"></div>
<div style="left:669px;top:253px;width:334px;height:1px;background:#a2a2a2;"></div>
<div style="left:669px;top:286px;width:334px;height:1px;background:#a2a2a2;"></div>
<div style="left:669px;top:319px;width:334px;height:1px;background:#a2a2a2;"></div>
<span style="left:673.40px;top:198.18px;font-size:11.6px;line-height:11.6px;color:#1c1c1c;white-space:pre;letter-spacing:-0.316px;font-weight:bold;">Point &amp; Figure Chart:</span>
<span style="left:673.40px;top:232.39px;font-size:11px;line-height:11px;color:#1c1c1c;white-space:pre;letter-spacing:-0.429px;">Scale:</span>
<div style="left:743px;top:228px;width:53px;height:20px;border:1px solid #b0b0b0;background:#fff;"></div>
<span style="left:745.80px;top:231.89px;font-size:11px;line-height:11px;color:#1c1c1c;white-space:pre;letter-spacing:-0.635px;">Classic</span>
<svg style="left:783.8px;top:235.4px" width="9" height="7"><path d="M1.2 1l3.1 3.7 3.1-3.7" stroke="#404040" stroke-width="1.5" fill="none"/></svg>
<span style="left:806.50px;top:232.39px;font-size:11px;line-height:11px;color:#1c1c1c;white-space:pre;letter-spacing:-0.187px;">Price:</span>
<div style="left:876px;top:228px;width:53px;height:20px;border:1px solid #b0b0b0;background:#fff;"></div>
<span style="left:879.00px;top:231.89px;font-size:11px;line-height:11px;color:#1c1c1c;white-space:pre;letter-spacing:-0.799px;">High a</span>
<svg style="left:916.8px;top:235.4px" width="9" height="7"><path d="M1.2 1l3.1 3.7 3.1-3.7" stroke="#404040" stroke-width="1.5" fill="none"/></svg>
<div style="left:907.5px;top:235px;width:1.5px;height:6.5px;background:#333;"></div>
<div style="left:944px;top:229px;width:50px;height:16px;border:1px solid #adadad;background:linear-gradient(#f3f3f3,#e4e4e4);"></div>
<span style="left:949.70px;top:232.39px;font-size:11px;line-height:11px;color:#1c1c1c;white-space:pre;letter-spacing:-0.517px;">Calculat</span>
<span style="left:673.40px;top:258.69px;font-size:11px;line-height:11px;color:#1c1c1c;white-space:pre;letter-spacing:-0.550px;">Reversal</span>
<span style="left:672.80px;top:270.19px;font-size:11px;line-height:11px;color:#1c1c1c;white-space:pre;letter-spacing:-0.107px;">amount:</span>
<div style="left:743px;top:261px;width:53px;height:19px;border:1px solid #b0b0b0;background:#fff;"></div>
<span style="left:771.88px;top:264.59px;font-size:11px;line-height:11px;color:#3a3a3a;white-space:pre;">3</span>
<div style="left:779.7px;top:262.2px;width:14.5px;height:8.5px;border:1px solid #c8c8c8;background:#e9e9e9;"></div>
<div style="left:779.7px;top:270.5px;width:14.5px;height:8.3px;border:1px solid #c8c8c8;background:#e9e9e9;"></div>
<svg style="left:779.7px;top:262px" width="15" height="17"><path d="M4.2 5.8L6.9 2.4 9.600 5.800z M4.2 11.1L6.9 14.5 9.600 11.1z" fill="#1a1a1a"/></svg>
<span style="left:806.50px;top:264.99px;font-size:11px;line-height:11px;color:#1c1c1c;white-space:pre;letter-spacing:-0.551px;">BoxSize:</span>
<div style="left:876px;top:261px;width:53px;height:19px;border:1px solid #b8b8b8;background:#fff;"></div>
<span style="left:899.44px;top:265.19px;font-size:11px;line-height:11px;color:#1c1c1c;white-space:pre;">1</span>
<span style="left:673.40px;top:298.18px;font-size:11.6px;line-height:11.6px;color:#1c1c1c;white-space:pre;letter-spacing:-0.173px;font-weight:bold;">KAGI:</span>
<span style="left:673.40px;top:325.69px;font-size:11px;line-height:11px;color:#1c1c1c;white-space:pre;letter-spacing:-0.550px;">Reversal</span>
<span style="left:672.80px;top:337.29px;font-size:11px;line-height:11px;color:#1c1c1c;white-space:pre;letter-spacing:-0.107px;">amount:</span>
<div style="left:743px;top:328px;width:53px;height:19px;border:1px solid #b0b0b0;background:#fff;"></div>
<span style="left:753.00px;top:331.59px;font-size:11px;line-height:11px;color:#3a3a3a;white-space:pre;letter-spacing:-0.505px;">3.000</span>
<div style="left:779.7px;top:329.2px;width:14.5px;height:8.5px;border:1px solid #c8c8c8;background:#e9e9e9;"></div>
<div style="left:779.7px;top:337.5px;width:14.5px;height:8.3px;border:1px solid #c8c8c8;background:#e9e9e9;"></div>
<svg style="left:779.7px;top:329px" width="15" height="17"><path d="M4.2 5.8L6.9 2.4 9.600 5.800z M4.2 11.1L6.9 14.5 9.600 11.1z" fill="#1a1a1a"/></svg>
<div style="left:811px;top:329px;width:50px;height:19px;border:1px solid #adadad;background:linear-gradient(#f3f3f3,#e4e4e4);"></div>
<span style="left:816.70px;top:332.19px;font-size:11px;line-height:11px;color:#1c1c1c;white-space:pre;letter-spacing:-0.467px;">Calculat</span>
<span style="left:672.40px;top:375.58px;font-size:11.6px;line-height:11.6px;color:#1c1c1c;white-space:pre;letter-spacing:-0.247px;font-weight:bold;">Bollinger Bands and Envelopes:</span>
<div style="left:670px;top:391px;width:1px;height:75px;background:rgba(255,255,255,0.55);"></div>
<div style="left:1003px;top:391px;width:1px;height:75px;background:rgba(255,255,255,0.55);"></div>
<div style="left:669px;top:392px;width:334px;height:1px;background:rgba(255,255,255,0.55);"></div>
<div style="left:669px;top:466px;width:334px;height:1px;background:rgba(255,255,255,0.55);"></div>
<div style="left:689px;top:391px;width:1px;height:75px;background:rgba(255,255,255,0.55);"></div>
<div style="left:752px;top:391px;width:1px;height:75px;background:rgba(255,255,255,0.55);"></div>
<div style="left:805px;top:391px;width:1px;height:75px;background:rgba(255,255,255,0.55);"></div>
<div style="left:852px;top:391px;width:1px;height:75px;background:rgba(255,255,255,0.55);"></div>
<div style="left:888px;top:391px;width:1px;height:75px;background:rgba(255,255,255,0.55);"></div>
<div style="left:917px;top:391px;width:1px;height:75px;background:rgba(255,255,255,0.55);"></div>
<div style="left:969px;top:391px;width:1px;height:75px;background:rgba(255,255,255,0.55);"></div>
<div style="left:669px;top:429px;width:334px;height:1px;background:rgba(255,255,255,0.55);"></div>
<div style="left:669px;top:391px;width:1px;height:75px;background:#a2a2a2;"></div>
<div style="left:1002px;top:391px;width:1px;height:75px;background:#a2a2a2;"></div>
<div style="left:669px;top:391px;width:334px;height:1px;background:#a2a2a2;"></div>
<div style="left:669px;top:465px;width:334px;height:1px;background:#a2a2a2;"></div>
<div style="left:688px;top:391px;width:1px;height:75px;background:#a2a2a2;"></div>
<div style="left:751px;top:391px;width:1px;height:75px;background:#a2a2a2;"></div>
<div style="left:804px;top:391px;width:1px;height:75px;background:#a2a2a2;"></div>
<div style="left:851px;top:391px;width:1px;height:75px;background:#a2a2a2;"></div>
<div style="left:887px;top:391px;width:1px;height:75px;background:#a2a2a2;"></div>
<div style="left:916px;top:391px;width:1px;height:75px;background:#a2a2a2;"></div>
<div style="left:968px;top:391px;width:1px;height:75px;background:#a2a2a2;"></div>
<div style="left:669px;top:428px;width:334px;height:1px;background:#a2a2a2;"></div>
<div style="left:673px;top:402.5px;width:13px;height:13px;border:1px solid #5a5a5a;background:#fff;"></div>
<svg style="left:673px;top:402.5px" width="13" height="13" viewBox="0 0 13 13"><path d="M2.8 6.6l2.6 2.8 4.8-6.4" stroke="#111" stroke-width="1.7" fill="none"/></svg>
<div style="left:673px;top:439.5px;width:13px;height:13px;border:1px solid #5a5a5a;background:#fff;"></div>
<span style="left:692.60px;top:397.99px;font-size:11px;line-height:11px;color:#1c1c1c;white-space:pre;letter-spacing:-0.645px;">Bollinger</span>
<span style="left:692.60px;top:409.99px;font-size:11px;line-height:11px;color:#1c1c1c;white-space:pre;letter-spacing:-0.738px;">Bands</span>
<span style="left:692.60px;top:441.69px;font-size:11px;line-height:11px;color:#1c1c1c;white-space:pre;letter-spacing:-0.552px;">Envelopes</span>
<span style="left:754.90px;top:397.99px;font-size:11px;line-height:11px;color:#1c1c1c;white-space:pre;letter-spacing:-0.533px;">Input</span>
<span style="left:754.90px;top:409.99px;font-size:11px;line-height:11px;color:#1c1c1c;white-space:pre;letter-spacing:-0.450px;">values:</span>
<span style="left:855.40px;top:397.99px;font-size:11px;line-height:11px;color:#1c1c1c;white-space:pre;letter-spacing:-0.776px;">Perio</span>
<span style="left:855.40px;top:409.99px;font-size:11px;line-height:11px;color:#1c1c1c;white-space:pre;letter-spacing:-0.587px;">d:</span>
<span style="left:754.90px;top:434.89px;font-size:11px;line-height:11px;color:#1c1c1c;white-space:pre;letter-spacing:-0.533px;">Input</span>
<span style="left:754.90px;top:446.89px;font-size:11px;line-height:11px;color:#1c1c1c;white-space:pre;letter-spacing:-0.450px;">values:</span>
<span style="left:855.40px;top:434.89px;font-size:11px;line-height:11px;color:#1c1c1c;white-space:pre;letter-spacing:-0.776px;">Perio</span>
<span style="left:855.40px;top:446.89px;font-size:11px;line-height:11px;color:#1c1c1c;white-space:pre;letter-spacing:-0.587px;">d:</span>
<div style="left:808px;top:402px;width:41px;height:20px;border:1px solid #b0b0b0;background:#fff;"></div>
<span style="left:810.70px;top:405.89px;font-size:11px;line-height:11px;color:#1c1c1c;white-space:pre;letter-spacing:-0.701px;">low</span>
<svg style="left:836.8px;top:409.4px" width="9" height="7"><path d="M1.2 1l3.1 3.7 3.1-3.7" stroke="#404040" stroke-width="1.5" fill="none"/></svg>
<div style="left:808px;top:439px;width:41px;height:20px;border:1px solid #b0b0b0;background:#fff;"></div>
<div style="left:810.7px;top:442px;width:20.0px;height:13px;background:#3a96f0;"></div>
<span style="left:811.20px;top:442.89px;font-size:11px;line-height:11px;color:#fff;white-space:pre;letter-spacing:-0.419px;">lose</span>
<svg style="left:836.8px;top:446.4px" width="9" height="7"><path d="M1.2 1l3.1 3.7 3.1-3.7" stroke="#404040" stroke-width="1.5" fill="none"/></svg>
<div style="left:890px;top:402px;width:23px;height:19px;border:1px solid #b8b8b8;background:#fff;"></div>
<span style="left:898.44px;top:406.19px;font-size:11px;line-height:11px;color:#1c1c1c;white-space:pre;">5</span>
<div style="left:890px;top:438px;width:23px;height:19px;border:1px solid #b8b8b8;background:#fff;"></div>
<span style="left:898.44px;top:442.19px;font-size:11px;line-height:11px;color:#1c1c1c;white-space:pre;">5</span>
<span style="left:920.00px;top:397.99px;font-size:11px;line-height:11px;color:#1c1c1c;white-space:pre;letter-spacing:-0.428px;">Deviation</span>
<span style="left:920.00px;top:409.99px;font-size:11px;line-height:11px;color:#1c1c1c;white-space:pre;">:</span>
<span style="left:920.00px;top:441.69px;font-size:11px;line-height:11px;color:#1c1c1c;white-space:pre;letter-spacing:-0.445px;">Shift:</span>
<div style="left:972px;top:402px;width:28px;height:19px;border:1px solid #b8b8b8;background:#fff;"></div>
<span style="left:982.94px;top:406.19px;font-size:11px;line-height:11px;color:#1c1c1c;white-space:pre;">5</span>
<div style="left:972px;top:438px;width:28px;height:19px;border:1px solid #b8b8b8;background:#fff;"></div>
<span style="left:982.94px;top:442.19px;font-size:11px;line-height:11px;color:#1c1c1c;white-space:pre;">5</span>
<span style="left:666.90px;top:489.29px;font-size:11px;line-height:11px;color:#2626b8;white-space:pre;letter-spacing:-0.258px;">Moving Averages/Moving Avg:</span>
<div style="left:665px;top:503px;width:1px;height:120px;background:rgba(255,255,255,0.55);"></div>
<div style="left:1008px;top:503px;width:1px;height:120px;background:rgba(255,255,255,0.55);"></div>
<div style="left:664px;top:504px;width:344px;height:1px;background:rgba(255,255,255,0.55);"></div>
<div style="left:664px;top:623px;width:344px;height:1px;background:rgba(255,255,255,0.55);"></div>
<div style="left:683px;top:503px;width:1px;height:120px;background:rgba(255,255,255,0.55);"></div>
<div style="left:726px;top:503px;width:1px;height:120px;background:rgba(255,255,255,0.55);"></div>
<div style="left:781px;top:503px;width:1px;height:120px;background:rgba(255,255,255,0.55);"></div>
<div style="left:836px;top:503px;width:1px;height:120px;background:rgba(255,255,255,0.55);"></div>
<div style="left:854px;top:503px;width:1px;height:120px;background:rgba(255,255,255,0.55);"></div>
<div style="left:897px;top:503px;width:1px;height:120px;background:rgba(255,255,255,0.55);"></div>
<div style="left:950px;top:503px;width:1px;height:120px;background:rgba(255,255,255,0.55);"></div>
<div style="left:664px;top:544px;width:344px;height:1px;background:rgba(255,255,255,0.55);"></div>
<div style="left:664px;top:563px;width:344px;height:1px;background:rgba(255,255,255,0.55);"></div>
<div style="left:664px;top:582px;width:344px;height:1px;background:rgba(255,255,255,0.55);"></div>
<div style="left:664px;top:601px;width:344px;height:1px;background:rgba(255,255,255,0.55);"></div>
<div style="left:664px;top:503px;width:1px;height:120px;background:#a2a2a2;"></div>
<div style="left:1007px;top:503px;width:1px;height:120px;background:#a2a2a2;"></div>
<div style="left:664px;top:503px;width:344px;height:1px;background:#a2a2a2;"></div>
<div style="left:664px;top:622px;width:344px;height:1px;background:#a2a2a2;"></div>
<div style="left:682px;top:503px;width:1px;height:120px;background:#a2a2a2;"></div>
<div style="left:725px;top:503px;width:1px;height:120px;background:#a2a2a2;"></div>
<div style="left:780px;top:503px;width:1px;height:120px;background:#a2a2a2;"></div>
<div style="left:835px;top:503px;width:1px;height:120px;background:#a2a2a2;"></div>
<div style="left:853px;top:503px;width:1px;height:120px;background:#a2a2a2;"></div>
<div style="left:896px;top:503px;width:1px;height:120px;background:#a2a2a2;"></div>
<div style="left:949px;top:503px;width:1px;height:120px;background:#a2a2a2;"></div>
<div style="left:664px;top:543px;width:344px;height:1px;background:#a2a2a2;"></div>
<div style="left:664px;top:562px;width:344px;height:1px;background:#a2a2a2;"></div>
<div style="left:664px;top:581px;width:344px;height:1px;background:#a2a2a2;"></div>
<div style="left:664px;top:600px;width:344px;height:1px;background:#a2a2a2;"></div>
<span style="left:685.60px;top:518.69px;font-size:11px;line-height:11px;color:#1c1c1c;white-space:pre;letter-spacing:-0.740px;">Name:</span>
<span style="left:857.70px;top:518.69px;font-size:11px;line-height:11px;color:#1c1c1c;white-space:pre;letter-spacing:-0.740px;">Name:</span>
<span style="left:729.10px;top:512.19px;font-size:11px;line-height:11px;color:#1c1c1c;white-space:pre;letter-spacing:-0.408px;">Avg on</span>
<span style="left:729.10px;top:524.39px;font-size:11px;line-height:11px;color:#1c1c1c;white-space:pre;letter-spacing:-0.433px;">price:</span>
<span style="left:900.10px;top:512.19px;font-size:11px;line-height:11px;color:#1c1c1c;white-space:pre;letter-spacing:-0.408px;">Avg on</span>
<span style="left:900.10px;top:524.39px;font-size:11px;line-height:11px;color:#1c1c1c;white-space:pre;letter-spacing:-0.433px;">price:</span>
<span style="left:783.80px;top:512.19px;font-size:11px;line-height:11px;color:#1c1c1c;white-space:pre;letter-spacing:-0.408px;">Avg on</span>
<span style="left:783.80px;top:524.39px;font-size:11px;line-height:11px;color:#1c1c1c;white-space:pre;letter-spacing:-0.490px;">period:</span>
<span style="left:952.90px;top:512.19px;font-size:11px;line-height:11px;color:#1c1c1c;white-space:pre;letter-spacing:-0.408px;">Avg on</span>
<span style="left:952.90px;top:524.39px;font-size:11px;line-height:11px;color:#1c1c1c;white-space:pre;letter-spacing:-0.490px;">period:</span>
<div style="left:667px;top:547px;width:12px;height:12px;border:1px solid #6a6a6a;border-left:none;background:#fff;"></div>
<svg style="left:667px;top:547px" width="12" height="12" viewBox="0 0 13 13"><path d="M2.8 6.6l2.6 2.8 4.8-6.4" stroke="#111" stroke-width="1.8" fill="none"/></svg>
<span style="left:688.60px;top:548.09px;font-size:11px;line-height:11px;color:#1c1c1c;white-space:pre;letter-spacing:-1.047px;">SMA</span>
<div style="left:727px;top:545px;width:52px;height:18px;background:#fff;border:1px solid #e2e2e2;"></div>
<span style="left:729.20px;top:548.89px;font-size:11px;line-height:11px;color:#1c1c1c;white-space:pre;letter-spacing:-0.649px;">high</span>
<svg style="left:767.5px;top:552.2px" width="9" height="7"><path d="M1 1l3.2 3.8 3.2-3.8" stroke="#404040" stroke-width="1.5" fill="none"/></svg>
<div style="left:782px;top:546px;width:52px;height:15px;border:1px solid #c2c2c2;background:#fff;"></div>
<span style="left:804.30px;top:547.67px;font-size:11.5px;line-height:11.5px;color:#1c1c1c;white-space:pre;">5</span>
<div style="left:838.6px;top:547px;width:12px;height:12px;border:1px solid #8a8a8a;border-left:none;border-top-color:#9a9a9a;background:#fdfdfd;"></div>
<span style="left:860.60px;top:548.09px;font-size:11px;line-height:11px;color:#1c1c1c;white-space:pre;letter-spacing:-0.882px;">HMA</span>
<div style="left:898px;top:545px;width:50px;height:18px;background:#fff;border:1px solid #e2e2e2;"></div>
<div style="left:899.8px;top:548.7px;width:25.9px;height:11.5px;background:#3a96f0;"></div>
<span style="left:900.20px;top:548.89px;font-size:11px;line-height:11px;color:#fff;white-space:pre;letter-spacing:-0.196px;">close</span>
<svg style="left:936.5px;top:552.2px" width="9" height="7"><path d="M1 1l3.2 3.8 3.2-3.8" stroke="#404040" stroke-width="1.5" fill="none"/></svg>
<div style="left:951px;top:546px;width:55px;height:15px;border:1px solid #c2c2c2;background:#fff;"></div>
<span style="left:975.40px;top:547.67px;font-size:11.5px;line-height:11.5px;color:#1c1c1c;white-space:pre;">5</span>
<div style="left:667px;top:566px;width:12px;height:12px;border:1px solid #6a6a6a;border-left:none;background:#fff;"></div>
<svg style="left:667px;top:566px" width="12" height="12" viewBox="0 0 13 13"><path d="M2.8 6.6l2.6 2.8 4.8-6.4" stroke="#111" stroke-width="1.8" fill="none"/></svg>
<span style="left:688.60px;top:567.09px;font-size:11px;line-height:11px;color:#1c1c1c;white-space:pre;letter-spacing:-1.047px;">EMA</span>
<div style="left:727px;top:564px;width:52px;height:18px;background:#fff;border:1px solid #e2e2e2;"></div>
<span style="left:729.20px;top:567.89px;font-size:11px;line-height:11px;color:#1c1c1c;white-space:pre;letter-spacing:-0.810px;">volume</span>
<svg style="left:767.5px;top:571.2px" width="9" height="7"><path d="M1 1l3.2 3.8 3.2-3.8" stroke="#404040" stroke-width="1.5" fill="none"/></svg>
<div style="left:782px;top:565px;width:52px;height:15px;border:1px solid #c2c2c2;background:#fff;"></div>
<span style="left:804.30px;top:566.67px;font-size:11.5px;line-height:11.5px;color:#1c1c1c;white-space:pre;">5</span>
<div style="left:838.6px;top:566px;width:12px;height:12px;border:1px solid #8a8a8a;border-left:none;border-top-color:#9a9a9a;background:#fdfdfd;"></div>
<span style="left:860.60px;top:567.09px;font-size:11px;line-height:11px;color:#1c1c1c;white-space:pre;letter-spacing:-0.715px;">TEMA</span>
<div style="left:898px;top:564px;width:50px;height:18px;background:#fff;border:1px solid #e2e2e2;"></div>
<div style="left:899.8px;top:567.7px;width:25.9px;height:11.5px;background:#3a96f0;"></div>
<span style="left:900.20px;top:567.89px;font-size:11px;line-height:11px;color:#fff;white-space:pre;letter-spacing:-0.196px;">close</span>
<svg style="left:936.5px;top:571.2px" width="9" height="7"><path d="M1 1l3.2 3.8 3.2-3.8" stroke="#404040" stroke-width="1.5" fill="none"/></svg>
<div style="left:951px;top:565px;width:55px;height:15px;border:1px solid #c2c2c2;background:#fff;"></div>
<span style="left:975.40px;top:566.67px;font-size:11.5px;line-height:11.5px;color:#1c1c1c;white-space:pre;">5</span>
<div style="left:667px;top:585px;width:12px;height:12px;border:1px solid #8a8a8a;border-left:none;border-top-color:#c8c8c8;background:#fdfdfd;"></div>
<span style="left:688.60px;top:586.09px;font-size:11px;line-height:11px;color:#1c1c1c;white-space:pre;letter-spacing:-0.628px;">WMA</span>
<div style="left:727px;top:583px;width:52px;height:18px;background:#fff;border:1px solid #e2e2e2;"></div>
<div style="left:728.8px;top:586.7px;width:26.2px;height:11.5px;background:#3a96f0;"></div>
<span style="left:729.20px;top:586.89px;font-size:11px;line-height:11px;color:#fff;white-space:pre;letter-spacing:-0.136px;">close</span>
<svg style="left:767.5px;top:590.2px" width="9" height="7"><path d="M1 1l3.2 3.8 3.2-3.8" stroke="#404040" stroke-width="1.5" fill="none"/></svg>
<div style="left:782px;top:584px;width:52px;height:15px;border:1px solid #c2c2c2;background:#fff;"></div>
<span style="left:804.30px;top:585.67px;font-size:11.5px;line-height:11.5px;color:#1c1c1c;white-space:pre;">5</span>
<div style="left:838.6px;top:585px;width:12px;height:12px;border:1px solid #8a8a8a;border-left:none;border-top-color:#9a9a9a;background:#fdfdfd;"></div>
<span style="left:860.60px;top:586.09px;font-size:11px;line-height:11px;color:#1c1c1c;white-space:pre;letter-spacing:-0.940px;">LMA</span>
<div style="left:898px;top:583px;width:50px;height:18px;background:#fff;border:1px solid #e2e2e2;"></div>
<div style="left:899.8px;top:586.7px;width:25.9px;height:11.5px;background:#3a96f0;"></div>
<span style="left:900.20px;top:586.89px;font-size:11px;line-height:11px;color:#fff;white-space:pre;letter-spacing:-0.196px;">close</span>
<svg style="left:936.5px;top:590.2px" width="9" height="7"><path d="M1 1l3.2 3.8 3.2-3.8" stroke="#404040" stroke-width="1.5" fill="none"/></svg>
<div style="left:951px;top:584px;width:55px;height:15px;border:1px solid #c2c2c2;background:#fff;"></div>
<span style="left:975.40px;top:585.67px;font-size:11.5px;line-height:11.5px;color:#1c1c1c;white-space:pre;">5</span>
<div style="left:667px;top:605.5px;width:12px;height:12px;border:1px solid #8a8a8a;border-left:none;border-top-color:#c8c8c8;background:#fdfdfd;"></div>
<span style="left:689.60px;top:606.89px;font-size:11px;line-height:11px;color:#1c1c1c;white-space:pre;letter-spacing:-0.840px;">TMA</span>
<div style="left:727px;top:602px;width:52px;height:21px;background:#fff;border:1px solid #e2e2e2;"></div>
<div style="left:728.8px;top:605.7px;width:26.2px;height:11.5px;background:#3a96f0;"></div>
<span style="left:729.20px;top:605.89px;font-size:11px;line-height:11px;color:#fff;white-space:pre;letter-spacing:-0.136px;">close</span>
<svg style="left:767.5px;top:609.2px" width="9" height="7"><path d="M1 1l3.2 3.8 3.2-3.8" stroke="#404040" stroke-width="1.5" fill="none"/></svg>
<div style="left:782px;top:604px;width:52px;height:16px;border:1px solid #c2c2c2;background:#fff;"></div>
<span style="left:804.30px;top:606.47px;font-size:11.5px;line-height:11.5px;color:#1c1c1c;white-space:pre;">5</span>
<div style="left:838.6px;top:605.5px;width:12px;height:12px;border:1px solid #8a8a8a;border-left:none;border-top-color:#9a9a9a;background:#fdfdfd;"></div>
<span style="left:860.60px;top:606.89px;font-size:11px;line-height:11px;color:#1c1c1c;white-space:pre;letter-spacing:-0.855px;">MMA</span>
<div style="left:898px;top:602px;width:50px;height:21px;background:#fff;border:1px solid #e2e2e2;"></div>
<div style="left:899.8px;top:605.7px;width:25.9px;height:11.5px;background:#3a96f0;"></div>
<span style="left:900.20px;top:605.89px;font-size:11px;line-height:11px;color:#fff;white-space:pre;letter-spacing:-0.196px;">close</span>
<svg style="left:936.5px;top:609.2px" width="9" height="7"><path d="M1 1l3.2 3.8 3.2-3.8" stroke="#404040" stroke-width="1.5" fill="none"/></svg>
<div style="left:951px;top:604px;width:55px;height:16px;border:1px solid #c2c2c2;background:#fff;"></div>
<span style="left:975.40px;top:606.47px;font-size:11.5px;line-height:11.5px;color:#1c1c1c;white-space:pre;">5</span>
<span style="left:666.70px;top:631.29px;font-size:11px;line-height:11px;color:#2626b8;white-space:pre;letter-spacing:-0.444px;">Misc Indicators:</span>
<div style="left:664px;top:648px;width:1px;height:49px;background:rgba(255,255,255,0.55);"></div>
<div style="left:1008px;top:648px;width:1px;height:49px;background:rgba(255,255,255,0.55);"></div>
<div style="left:663px;top:649px;width:345px;height:1px;background:rgba(255,255,255,0.55);"></div>
<div style="left:663px;top:697px;width:345px;height:1px;background:rgba(255,255,255,0.55);"></div>
<div style="left:683px;top:648px;width:1px;height:49px;background:rgba(255,255,255,0.55);"></div>
<div style="left:737px;top:648px;width:1px;height:49px;background:rgba(255,255,255,0.55);"></div>
<div style="left:791px;top:648px;width:1px;height:49px;background:rgba(255,255,255,0.55);"></div>
<div style="left:822px;top:648px;width:1px;height:49px;background:rgba(255,255,255,0.55);"></div>
<div style="left:880px;top:648px;width:1px;height:49px;background:rgba(255,255,255,0.55);"></div>
<div style="left:911px;top:648px;width:1px;height:49px;background:rgba(255,255,255,0.55);"></div>
<div style="left:973px;top:648px;width:1px;height:49px;background:rgba(255,255,255,0.55);"></div>
<div style="left:663px;top:677px;width:345px;height:1px;background:rgba(255,255,255,0.55);"></div>
<div style="left:663px;top:648px;width:1px;height:49px;background:#a2a2a2;"></div>
<div style="left:1007px;top:648px;width:1px;height:49px;background:#a2a2a2;"></div>
<div style="left:663px;top:648px;width:345px;height:1px;background:#a2a2a2;"></div>
<div style="left:663px;top:696px;width:345px;height:1px;background:#a2a2a2;"></div>
<div style="left:682px;top:648px;width:1px;height:49px;background:#a2a2a2;"></div>
<div style="left:736px;top:648px;width:1px;height:49px;background:#a2a2a2;"></div>
<div style="left:790px;top:648px;width:1px;height:49px;background:#a2a2a2;"></div>
<div style="left:821px;top:648px;width:1px;height:49px;background:#a2a2a2;"></div>
<div style="left:879px;top:648px;width:1px;height:49px;background:#a2a2a2;"></div>
<div style="left:910px;top:648px;width:1px;height:49px;background:#a2a2a2;"></div>
<div style="left:972px;top:648px;width:1px;height:49px;background:#a2a2a2;"></div>
<div style="left:663px;top:676px;width:345px;height:1px;background:#a2a2a2;"></div>
<div style="left:667px;top:655.5px;width:12px;height:12px;border:1px solid #8a8a8a;border-left:none;border-top-color:#9a9a9a;background:#fdfdfd;"></div>
<div style="left:667px;top:680px;width:12px;height:12px;border:1px solid #8a8a8a;border-left:none;border-top-color:#9a9a9a;background:#fdfdfd;"></div>
<span style="left:685.50px;top:649.99px;font-size:11px;line-height:11px;color:#1c1c1c;white-space:pre;letter-spacing:-0.505px;">Stochasti</span>
<span style="left:685.50px;top:661.99px;font-size:11px;line-height:11px;color:#1c1c1c;white-space:pre;">c</span>
<span style="left:685.50px;top:681.69px;font-size:11px;line-height:11px;color:#1c1c1c;white-space:pre;letter-spacing:-0.922px;">MACD</span>
<span style="left:739.40px;top:649.99px;font-size:11px;line-height:11px;color:#1c1c1c;white-space:pre;letter-spacing:-1.410px;">%K</span>
<span style="left:739.40px;top:661.99px;font-size:11px;line-height:11px;color:#1c1c1c;white-space:pre;letter-spacing:-0.562px;">period:</span>
<span style="left:739.40px;top:678.69px;font-size:11px;line-height:11px;color:#1c1c1c;white-space:pre;letter-spacing:-0.617px;">Long</span>
<div style="left:792px;top:653px;width:28px;height:19px;border:1px solid #b8b8b8;background:#fff;"></div>
<span style="left:802.94px;top:657.19px;font-size:11px;line-height:11px;color:#1c1c1c;white-space:pre;">5</span>
<div style="left:792px;top:678px;width:28px;height:18px;border:1px solid #b8b8b8;background:#fff;"></div>
<span style="left:799.88px;top:681.69px;font-size:11px;line-height:11px;color:#1c1c1c;white-space:pre;">26</span>
<span style="left:824.80px;top:649.99px;font-size:11px;line-height:11px;color:#1c1c1c;white-space:pre;letter-spacing:-0.686px;">%K slowing</span>
<span style="left:824.80px;top:661.99px;font-size:11px;line-height:11px;color:#1c1c1c;white-space:pre;letter-spacing:-0.562px;">period:</span>
<span style="left:824.80px;top:678.69px;font-size:11px;line-height:11px;color:#1c1c1c;white-space:pre;letter-spacing:-0.739px;">Short</span>
<div style="left:882px;top:653px;width:26px;height:19px;border:1px solid #b8b8b8;background:#fff;"></div>
<span style="left:891.94px;top:657.19px;font-size:11px;line-height:11px;color:#1c1c1c;white-space:pre;">3</span>
<div style="left:882px;top:678px;width:26px;height:18px;border:1px solid #b8b8b8;background:#fff;"></div>
<span style="left:888.88px;top:681.69px;font-size:11px;line-height:11px;color:#1c1c1c;white-space:pre;">12</span>
<span style="left:914.60px;top:658.09px;font-size:11px;line-height:11px;color:#1c1c1c;white-space:pre;letter-spacing:-0.621px;">%D period:</span>
<span style="left:914.60px;top:678.69px;font-size:11px;line-height:11px;color:#1c1c1c;white-space:pre;letter-spacing:-1.046px;">Signal</span>
<div style="left:974px;top:653px;width:32px;height:19px;border:1px solid #b8b8b8;background:#fff;"></div>
<span style="left:986.94px;top:657.19px;font-size:11px;line-height:11px;color:#1c1c1c;white-space:pre;">5</span>
<div style="left:974px;top:678px;width:32px;height:18px;border:1px solid #b8b8b8;background:#fff;"></div>
<span style="left:986.94px;top:681.69px;font-size:11px;line-height:11px;color:#1c1c1c;white-space:pre;">9</span>
<svg style="left:0;top:0" width="260" height="180" viewBox="0 0 260 180"><g transform="translate(75,65) rotate(-18.8)"><text x="0" y="0" text-anchor="middle" font-family="Liberation Serif, serif" font-weight="bold" font-size="27.5" textLength="71" lengthAdjust="spacingAndGlyphs" stroke="#000" stroke-width="13.5" stroke-linejoin="round" fill="#000">CRACK</text><text x="0" y="0" text-anchor="middle" font-family="Liberation Serif, serif" font-weight="bold" font-size="27.5" textLength="71" lengthAdjust="spacingAndGlyphs" stroke="#fff" stroke-width="2.6" stroke-linejoin="round" fill="#fff">CRACK</text></g></svg>
<svg style="left:0;top:0" width="260" height="180" viewBox="0 0 260 180"><g transform="translate(92,91.8) rotate(-18.8)"><text x="0" y="0" text-anchor="middle" font-family="Liberation Serif, serif" font-weight="bold" font-size="27.5" textLength="166" lengthAdjust="spacingAndGlyphs" stroke="#000" stroke-width="13.5" stroke-linejoin="round" fill="#000">VSE-PUTEM.com</text><text x="0" y="0" text-anchor="middle" font-family="Liberation Serif, serif" font-weight="bold" font-size="27.5" textLength="166" lengthAdjust="spacingAndGlyphs" stroke="#fff" stroke-width="2.6" stroke-linejoin="round" fill="#fff">VSE-PUTEM.com</text></g></svg>
<svg style="left:530px;top:225px" width="160" height="70" viewBox="530 225 160 70"><text x="540" y="259.8" font-size="21.5" fill="#000" fill-opacity="0.07" textLength="117" lengthAdjust="spacingAndGlyphs" font-family="Liberation Serif, serif">SOFTPEDIA</text><text x="539" y="258.9" font-size="21.5" fill="#fff" fill-opacity="0.36" textLength="117" lengthAdjust="spacingAndGlyphs" font-family="Liberation Serif, serif">SOFTPEDIA</text><text x="558.2" y="276.9" font-size="10" fill="#fff" fill-opacity="0.4" textLength="78.5" lengthAdjust="spacingAndGlyphs" font-family="Liberation Sans, sans-serif">www.softpedia.com</text></svg></div>
</body></html>
